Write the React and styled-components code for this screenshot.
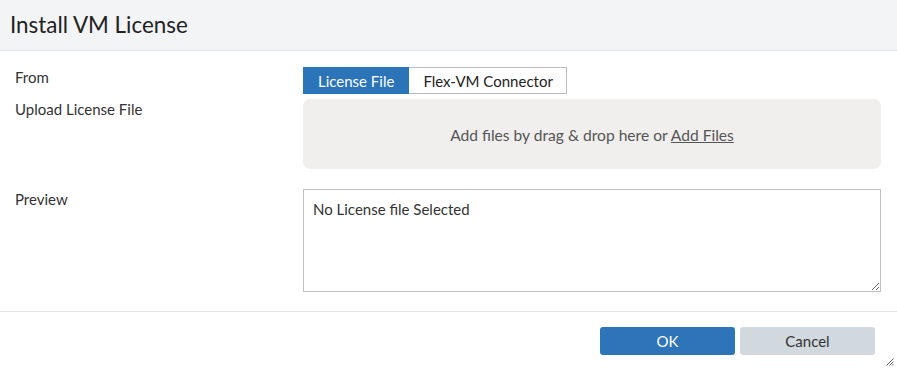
import React from 'react';
import styled, { createGlobalStyle } from 'styled-components';

const GlobalStyle = createGlobalStyle`
  html, body {
    margin: 0;
    padding: 0;
    background: #fff;
    font-family: Lato, "Open Sans", sans-serif;
    color: #333;
  }
`;

function App() {
  return (
    <>
      <GlobalStyle />
      <Dialog>
        <Header>
          <Title>Install VM License</Title>
        </Header>

        <Body>
          <Label>From</Label>
          <Field>
            <Tabs>
              <Tab active>License File</Tab>
              <Tab>Flex-VM Connector</Tab>
            </Tabs>
          </Field>

          <Label>Upload License File</Label>
          <Field>
            <DropZone>
              <span>
                Add files by drag &amp; drop here or <AddLink>Add Files</AddLink>
              </span>
            </DropZone>
          </Field>

          <Label spaced>Preview</Label>
          <Field spaced>
            <Preview readOnly value="No License file Selected" />
          </Field>
        </Body>

        <Footer>
          <Button primary>OK</Button>
          <Button>Cancel</Button>
          <Grip width="8" height="8" viewBox="0 0 8 8">
            <path d="M7.5 0.5L0.5 7.5M7.5 3.5L3.5 7.5M7.5 6L6 7.5" stroke="#666" strokeWidth="1" />
          </Grip>
        </Footer>
      </Dialog>
    </>
  );
}
export default App;

const Dialog = styled.div`
  width: 897px;
  height: 370px;
  display: flex;
  flex-direction: column;
  position: relative;
`;

const Header = styled.div`
  height: 50px;
  background: #f3f4f6;
  border-bottom: 1px solid #dfe1e4;
  display: flex;
  align-items: center;
  padding: 0 10px;
`;

const Title = styled.h1`
  margin: 0;
  font-size: 22.4px;
  font-weight: 400;
  color: #222;
  padding-bottom: 2px;
`;

const Body = styled.div`
  display: grid;
  grid-template-columns: 288px 578px;
  padding: 16px 0 19px 15px;
  border-bottom: 1px solid #e3e4e6;
`;

const Label = styled.div`
  font-size: 15px;
  line-height: 20px;
  margin-top: ${p => (p.spaced ? '15px' : '0')};
  color: #333;
`;

const Field = styled.div`
  margin-top: ${p => (p.spaced ? '15px' : '0')};
  margin-bottom: 5px;
  &:last-child {
    margin-bottom: 0;
  }
`;

const Tabs = styled.div`
  display: inline-flex;
  border: 1px solid #b9bcc0;
  height: 25px;
`;

const Tab = styled.div`
  display: flex;
  align-items: center;
  padding: ${p => (p.active ? '0 15px' : '0 13px 0 14px')};
  font-size: 15px;
  background: ${p => (p.active ? '#2c74b8' : '#fff')};
  color: ${p => (p.active ? '#fff' : '#222')};
  margin: ${p => (p.active ? '-1px 0 -1px -1px' : '0')};
  cursor: pointer;
`;

const DropZone = styled.div`
  height: 70px;
  background: #f0efee;
  border-radius: 7px;
  display: flex;
  align-items: center;
  justify-content: center;
  font-size: 15.6px;
  color: #555;
  padding-top: 2px;
  box-sizing: border-box;
`;

const AddLink = styled.span`
  text-decoration: underline;
  cursor: pointer;
`;

const Preview = styled.textarea`
  display: block;
  width: 578px;
  height: 103px;
  box-sizing: border-box;
  border: 1px solid #bfc1c4;
  padding: 10px 9px;
  margin: 0;
  font-family: Lato, "Open Sans", sans-serif;
  font-size: 15px;
  color: #333;
  outline: none;
`;

const Footer = styled.div`
  display: flex;
  justify-content: flex-end;
  gap: 5px;
  padding: 15px 22px 0 0;
  position: relative;
  flex: 1;
`;

const Button = styled.button`
  width: 135px;
  height: 28px;
  border: none;
  border-radius: 3px;
  font-family: Lato, "Open Sans", sans-serif;
  font-size: 15px;
  background: ${p => (p.primary ? '#2d74b9' : '#d1d8de')};
  color: ${p => (p.primary ? '#fff' : '#333')};
  cursor: pointer;
`;

const Grip = styled.svg`
  position: absolute;
  right: 3px;
  bottom: 4px;
`;
